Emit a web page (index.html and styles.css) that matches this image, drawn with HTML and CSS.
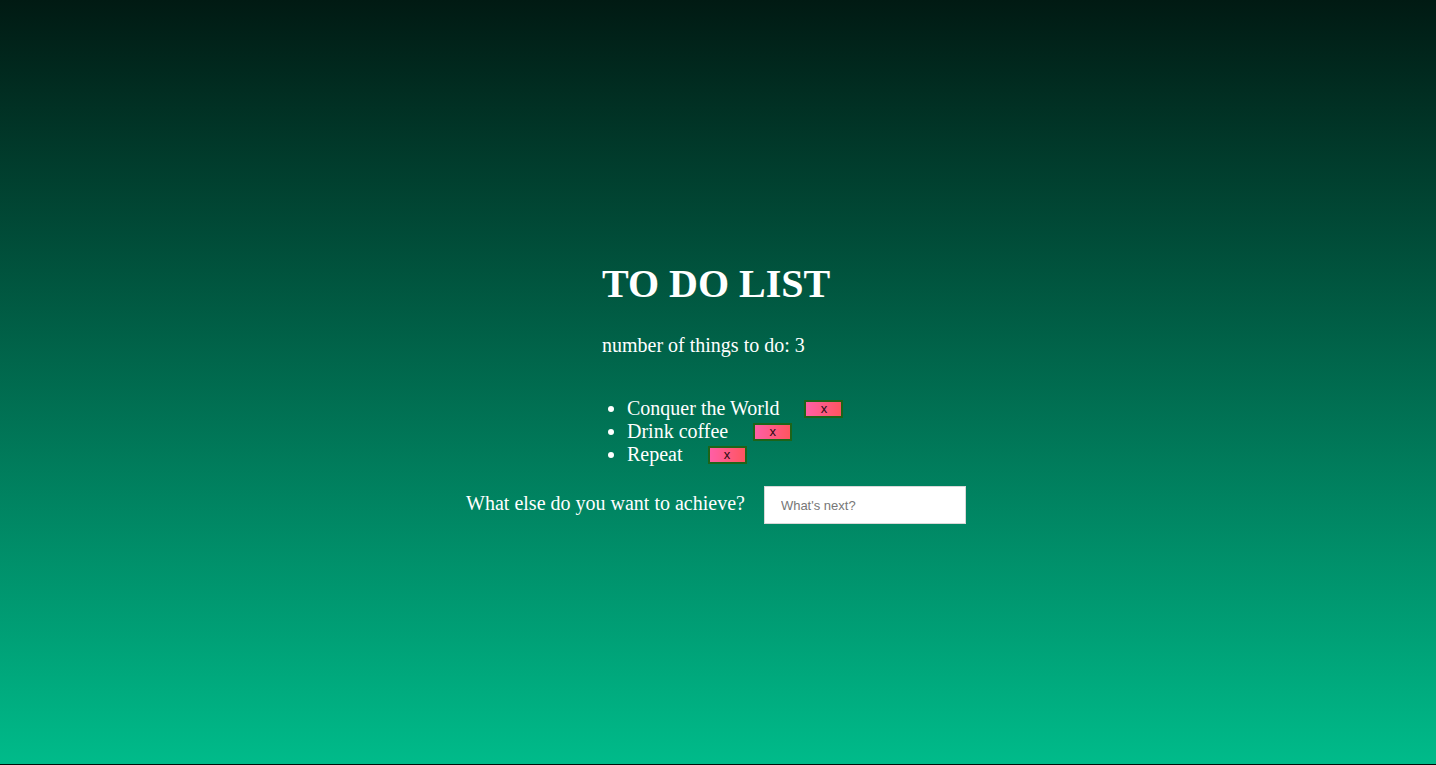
FILE: index.html
```html
<!DOCTYPE html>
<html lang="en">
<head>
<meta charset="utf-8">
<title>To Do List</title>
<link rel="stylesheet" href="styles.css">
</head>
<body>
<main class="app">
  <div class="wrap">
    <h1 class="title">TO DO LIST</h1>
    <p class="count">number of things to do: 3</p>
    <ul class="list">
      <li class="item">Conquer the World <button class="del">x</button></li>
      <li class="item">Drink coffee <button class="del">x</button></li>
      <li class="item">Repeat <button class="del">x</button></li>
    </ul>
  </div>
  <form class="add">
    <label class="add-label" for="next">What else do you want to achieve?</label>
    <input class="add-input" id="next" type="text" placeholder="What's next?">
  </form>
</main>
</body>
</html>
```

FILE: styles.css
```css
html {
  background: #000e0a;
}
body {
  margin: 0;
  height: 764px;
  background: linear-gradient(to bottom, #011a13 0%, #00bb8a 100%);
  font-family: "Liberation Serif", "Times New Roman", serif;
  color: #ffffff;
}
.app {
  padding-top: 261px;
}
.wrap {
  width: 232px;
  margin: 0 auto;
}
.title {
  margin: 0;
  font-size: 40px;
  line-height: 46px;
  font-weight: bold;
  white-space: nowrap;
}
.count {
  margin: 27px 0 0;
  font-size: 20px;
  line-height: 23px;
  white-space: nowrap;
}
.list {
  margin: 40px 0 0;
  padding-left: 25px;
  font-size: 20px;
  line-height: 23px;
  white-space: nowrap;
}
.del {
  margin-left: 20px;
  width: 39px;
  height: 18px;
  padding: 0;
  vertical-align: 2px;
  border: 2px solid #1d6419;
  background: linear-gradient(to right, #ff5fa6, #ff5560) padding-box;
  font-family: "Liberation Sans", Arial, sans-serif;
  font-size: 13px;
  line-height: 13px;
  color: #2a0a12;
}
.add {
  margin-top: 20px;
  padding-right: 4px;
  display: flex;
  justify-content: center;
  align-items: flex-start;
  gap: 19px;
}
.add-label {
  margin-top: 6px;
  font-size: 20px;
  line-height: 23px;
}
.add-input {
  box-sizing: border-box;
  width: 202px;
  height: 38px;
  margin: 0;
  padding: 0 16px;
  border: 1px solid #d8d8d8;
  background: #ffffff;
  font-family: "Liberation Sans", Arial, sans-serif;
  font-size: 13px;
  color: #333;
}
.add-input::placeholder {
  color: #777777;
}
```
